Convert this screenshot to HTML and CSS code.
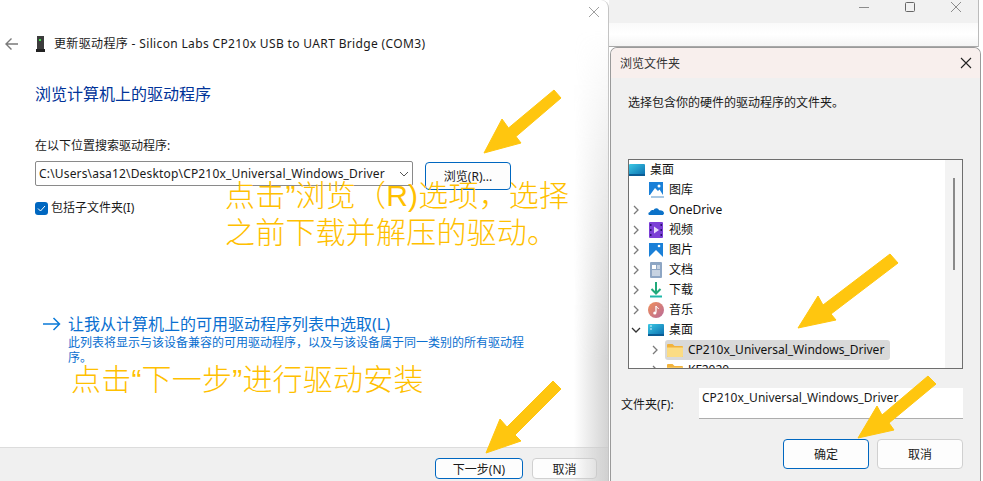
FILE: index.html
```html
<!DOCTYPE html>
<html lang="zh-CN">
<head>
<meta charset="utf-8">
<title>更新驱动程序</title>
<link rel="stylesheet" href="styles.css">
</head>
<body>
<div class="desktop">
  <section class="wizard">
    <div class="wizard-close">
      <svg width="12" height="12" viewBox="0 0 12 12"><path d="M1 1l10 10M11 1L1 11" stroke="#a0a0a0" stroke-width="1" fill="none"/></svg>
    </div>
    <header class="wizard-title">
      <svg class="back" width="16" height="14" viewBox="0 0 16 14"><path d="M14 7H2M7.500 1.500L2 7l5.500 5.500" stroke="#7a7a7a" stroke-width="1.400" fill="none"/></svg>
      <svg class="device" width="9" height="16" viewBox="0 0 9 16"><rect x="1" y="0" width="7" height="13" fill="#3c3c3c"/><rect x="3" y="3" width="2" height="2" fill="#3fe04a"/><rect x="0" y="13" width="9" height="3" fill="#222"/></svg>
      <span>更新驱动程序 - Silicon Labs CP210x USB to UART Bridge (COM3)</span>
    </header>
    <main class="wizard-main">
      <h1 class="heading">浏览计算机上的驱动程序</h1>
      <label class="field-label">在以下位置搜索驱动程序:</label>
      <div class="path-row">
        <div class="combo">
          <span class="combo-text">C:\Users\asa12\Desktop\CP210x_Universal_Windows_Driver</span>
          <svg width="10" height="6" viewBox="0 0 10 6"><path d="M1 1l4 4 4-4" stroke="#555" stroke-width="1" fill="none"/></svg>
        </div>
        <button class="btn btn-primary btn-browse">浏览(R)...</button>
      </div>
      <div class="check-row">
        <span class="check"><svg width="9" height="7" viewBox="0 0 9 7"><path d="M1 3.500l2.500 2.500L8 1" stroke="#fff" stroke-width="1" fill="none"/></svg></span>
        <span>包括子文件夹(I)</span>
      </div>
      <div class="link-block">
        <svg class="link-arrow" width="18" height="14" viewBox="0 0 18 14"><path d="M0 7h16.500M10.500 1l6 6-6 6" stroke="#0a7ad8" stroke-width="1.500" fill="none"/></svg>
        <div class="link-text">
          <div class="link-title">让我从计算机上的可用驱动程序列表中选取(L)</div>
          <p class="link-desc">此列表将显示与该设备兼容的可用驱动程序，以及与该设备属于同一类别的所有驱动程序。</p>
        </div>
      </div>
    </main>
    <footer class="wizard-foot">
      <button class="btn btn-primary btn-next">下一步(N)</button>
      <button class="btn btn-cancel">取消</button>
    </footer>
  </section>

  <section class="back-window">
    <div class="back-bar">
      <svg width="12" height="12" viewBox="0 0 12 12"><path d="M1 6.500h10" stroke="#8c8c8c" fill="none"/></svg>
      <svg width="12" height="12" viewBox="0 0 12 12"><rect x="1.500" y="1.500" width="9" height="9" rx="1" stroke="#666" fill="none"/></svg>
      <svg width="12" height="12" viewBox="0 0 12 12"><path d="M1 1l10 10M11 1L1 11" stroke="#8c8c8c" fill="none"/></svg>
    </div>
    <div class="back-strip"></div>
  </section>

  <section class="dialog">
    <header class="dialog-title">
      <span>浏览文件夹</span>
      <svg width="12" height="12" viewBox="0 0 12 12"><path d="M1 1l10 10M11 1L1 11" stroke="#222" stroke-width="1.100" fill="none"/></svg>
    </header>
    <div class="dialog-body">
      <p class="dialog-msg">选择包含你的硬件的驱动程序的文件夹。</p>
      <div class="tree">
        <div class="tree-list">
          <div class="row row-root">
            <svg class="ico" width="16" height="12" viewBox="0 0 16 12"><defs><linearGradient id="d1" x1="0" x2="1" y1="0" y2="1"><stop offset="0" stop-color="#3cc8e4"/><stop offset="1" stop-color="#0a6fb0"/></linearGradient></defs><rect width="16" height="11" rx="1" fill="url(#d1)"/><rect y="10" width="16" height="2" fill="#0b5c94"/></svg>
            <span class="name">桌面</span>
          </div>
          <div class="row">
            <span class="chev"></span>
            <svg class="ico" width="16" height="16" viewBox="0 0 16 16"><path d="M1 0h14v13H1z" fill="#1a80d8"/><path d="M2 13l5-7 3 3 1.500-1.500L15 13z" fill="#fff"/><circle cx="11" cy="4" r="1.500" fill="#fff"/><path d="M3 14h13v2H3z" fill="#a9c9e4"/></svg>
            <span class="name">图库</span>
          </div>
          <div class="row">
            <svg class="chev" width="6" height="10" viewBox="0 0 6 10"><path d="M1 1l4 4-4 4" stroke="#7a7a7a" stroke-width="1.300" fill="none"/></svg>
            <svg class="ico" width="16" height="16" viewBox="0 0 16 16"><path d="M1.500 13C0 13 0 10.200 2 10c.3-2 2.500-2.500 3.500-1.800C6.500 5.500 10.500 5.500 11 8.200c2.500-.4 5 1 5 3 0 1.200-1 1.800-2 1.800z" fill="#0c72c8"/></svg>
            <span class="name">OneDrive</span>
          </div>
          <div class="row">
            <svg class="chev" width="6" height="10" viewBox="0 0 6 10"><path d="M1 1l4 4-4 4" stroke="#7a7a7a" stroke-width="1.300" fill="none"/></svg>
            <svg class="ico" width="16" height="16" viewBox="0 0 16 16"><rect x="1" y="0" width="14" height="16" rx="1" fill="#7b3fd6"/><path d="M6 4.500l5 3.500-5 3.500z" fill="#e8dcfb"/><path d="M2 2h1.500v2H2zM2 7h1.500v2H2zM2 12h1.500v2H2zM12.500 2H14v2h-1.500zM12.500 7H14v2h-1.500zM12.500 12H14v2h-1.500z" fill="#2c1270"/></svg>
            <span class="name">视频</span>
          </div>
          <div class="row">
            <svg class="chev" width="6" height="10" viewBox="0 0 6 10"><path d="M1 1l4 4-4 4" stroke="#7a7a7a" stroke-width="1.300" fill="none"/></svg>
            <svg class="ico" width="16" height="16" viewBox="0 0 16 16"><rect x="1" y="1" width="14" height="14" fill="#1a80d8"/><path d="M1 15l7-7 7 7z" fill="#fff"/><circle cx="11" cy="4" r="1.300" fill="#fff"/></svg>
            <span class="name">图片</span>
          </div>
          <div class="row">
            <svg class="chev" width="6" height="10" viewBox="0 0 6 10"><path d="M1 1l4 4-4 4" stroke="#7a7a7a" stroke-width="1.300" fill="none"/></svg>
            <svg class="ico" width="16" height="16" viewBox="0 0 16 16"><rect x="2" y="0" width="12" height="16" rx="1" fill="#8ea6c4"/><path d="M4 3h4v4H4z" fill="#fff"/><path d="M9 4h3M9 6h3M4 9h8M4 11h8M4 13h8" stroke="#fff" fill="none"/></svg>
            <span class="name">文档</span>
          </div>
          <div class="row">
            <svg class="chev" width="6" height="10" viewBox="0 0 6 10"><path d="M1 1l4 4-4 4" stroke="#7a7a7a" stroke-width="1.300" fill="none"/></svg>
            <svg class="ico" width="16" height="16" viewBox="0 0 16 16"><path d="M8 0v11M3.500 7L8 11.500 12.500 7" stroke="#1fa97a" stroke-width="2" fill="none"/><path d="M2 14.500h12" stroke="#1fb8a8" stroke-width="2" fill="none"/></svg>
            <span class="name">下载</span>
          </div>
          <div class="row">
            <svg class="chev" width="6" height="10" viewBox="0 0 6 10"><path d="M1 1l4 4-4 4" stroke="#7a7a7a" stroke-width="1.300" fill="none"/></svg>
            <svg class="ico" width="16" height="16" viewBox="0 0 16 16"><defs><linearGradient id="m1" x1="0" x2="1" y1="0" y2="1"><stop offset="0" stop-color="#f0905a"/><stop offset="1" stop-color="#b86a9a"/></linearGradient></defs><circle cx="8" cy="8" r="8" fill="url(#m1)"/><path d="M8 4v6.500" stroke="#fff" stroke-width="1.300"/><circle cx="6.800" cy="11" r="1.600" fill="#fff"/><path d="M8 4c.5 1.500 2.500 1.500 2.500 3" stroke="#fff" fill="none"/></svg>
            <span class="name">音乐</span>
          </div>
          <div class="row">
            <svg class="chev chev-open" width="10" height="6" viewBox="0 0 10 6"><path d="M1 1l4 4 4-4" stroke="#333" stroke-width="1.300" fill="none"/></svg>
            <svg class="ico" width="16" height="12" viewBox="0 0 16 12"><rect width="16" height="11" rx="1" fill="url(#d1)"/><rect y="10" width="16" height="2" fill="#0b5c94"/><path d="M2 2h2M2 5h2" stroke="#d8f2fb" fill="none"/></svg>
            <span class="name">桌面</span>
          </div>
          <div class="row row-child">
            <svg class="chev" width="6" height="10" viewBox="0 0 6 10"><path d="M1 1l4 4-4 4" stroke="#7a7a7a" stroke-width="1.300" fill="none"/></svg>
            <div class="cell cell-selected">
              <svg class="ico" width="16" height="13" viewBox="0 0 16 13"><path d="M0 1a1 1 0 0 1 1-1h4.500l2 2H15a1 1 0 0 1 1 1v9a1 1 0 0 1-1 1H1a1 1 0 0 1-1-1z" fill="#f2b33c"/><path d="M0 3.500h16V12a1 1 0 0 1-1 1H1a1 1 0 0 1-1-1z" fill="#fbdc84"/></svg>
              <span class="name">CP210x_Universal_Windows_Driver</span>
            </div>
          </div>
          <div class="row row-child">
            <svg class="chev" width="6" height="10" viewBox="0 0 6 10"><path d="M1 1l4 4-4 4" stroke="#7a7a7a" stroke-width="1.300" fill="none"/></svg>
            <div class="cell">
              <svg class="ico" width="16" height="13" viewBox="0 0 16 13"><path d="M0 1a1 1 0 0 1 1-1h4.500l2 2H15a1 1 0 0 1 1 1v9a1 1 0 0 1-1 1H1a1 1 0 0 1-1-1z" fill="#f2b33c"/><path d="M0 3.500h16V12a1 1 0 0 1-1 1H1a1 1 0 0 1-1-1z" fill="#fbdc84"/></svg>
              <span class="name">KF2020</span>
            </div>
          </div>
        </div>
        <div class="scroll"><div class="thumb"></div></div>
      </div>
      <div class="folder-row">
        <label class="folder-label">文件夹(F):</label>
        <div class="folder-input">CP210x_Universal_Windows_Driver</div>
      </div>
      <div class="dialog-actions">
        <button class="btn btn-primary btn-dlg">确定</button>
        <button class="btn btn-cancel btn-dlg">取消</button>
      </div>
    </div>
  </section>

  <div class="note note-browse">点击”浏览（R)选项，选择<br>之前下载并解压的驱动。</div>
  <div class="note note-next">点击“下一步”进行驱动安装</div>

  <svg class="arrows" width="983" height="481" viewBox="0 0 983 481">
    <g fill="#ffc60f" stroke="#ffc60f" stroke-linejoin="round">
      <path d="M484 153L502 119L508.500 128L554 90L561 98L516 136.500L521 143z"/>
      <path d="M486 453L500 419L507 427L553 381L561 389L515 435L521 441z"/>
      <path d="M798 328L818 296L823 305L890 254L898 263L831 314L836 320z"/>
      <path d="M858 438L877 406L882 415L928 376L936 384L889 423L894 430z"/>
    </g>
  </svg>
</div>
</body>
</html>
```

FILE: styles.css
```css
* { box-sizing: border-box; }
html, body { margin: 0; padding: 0; }
body {
  font-family: "Noto Sans", "Noto Sans CJK SC", sans-serif;
  font-size: 12px;
  color: #1a1a1a;
  background: #fff;
}
.desktop {
  position: relative;
  width: 983px;
  height: 481px;
  overflow: hidden;
  display: flex;
  background: #fff;
}

/* wizard */
.wizard {
  position: relative;
  width: 609px;
  height: 481px;
  flex: none;
  display: flex;
  flex-direction: column;
  border-top-right-radius: 8px;
  border-right: 1px solid #c4c4c4;
  background: #fff;
}
.wizard::after {
  content: "";
  position: absolute;
  right: 0;
  top: 0;
  bottom: 0;
  width: 34px;
  background: linear-gradient(to right, rgba(200,200,200,0), rgba(200,200,200,.8));
  -webkit-mask-image: linear-gradient(to bottom, transparent 30px, #000 360px);
  mask-image: linear-gradient(to bottom, transparent 30px, #000 360px);
  pointer-events: none;
}
.wizard-close { position: absolute; left: 588px; top: 6px; line-height: 0; }
.wizard-title {
  display: flex;
  align-items: center;
  height: 16px;
  margin-top: 36px;
  padding-left: 4px;
  line-height: 16px;
  white-space: nowrap;
  letter-spacing: .35px;
}
.wizard-title .device { margin-left: 16px; margin-right: 9px; }
.wizard-main { flex: 1; padding: 32px 0 0 35px; }
.heading {
  margin: 0;
  font-size: 16px;
  line-height: 20px;
  font-weight: 400;
  color: #003399;
}
.field-label { display: block; margin-top: 34px; line-height: 16px; }
.path-row { display: flex; align-items: flex-start; margin-top: 7px; }
.combo {
  width: 378px;
  height: 25px;
  display: flex;
  align-items: center;
  justify-content: space-between;
  padding: 0 3px 0 3px;
  background: #fff;
  border: 1px solid #8a8a8a;
  border-radius: 2px;
  white-space: nowrap;
}
.combo-text { letter-spacing: .17px; }
.combo svg { flex: none; }
.btn {
  font-family: inherit;
  font-size: 12px;
  color: #1a1a1a;
  padding: 0;
  background: #fdfdfd;
  border: 1px solid #d0d0d0;
  border-radius: 4px;
}
.btn-primary { border: 1px solid #0067c0; }
.btn-browse { width: 86px; height: 28px; margin: 1px 0 0 12px; }
.check-row { display: flex; align-items: center; height: 14px; margin-top: 11px; line-height: 14px; }
.check {
  width: 13px;
  height: 13px;
  margin-right: 3px;
  display: flex;
  align-items: center;
  justify-content: center;
  background: #0067c0;
  border-radius: 3px;
}
.link-block { display: flex; align-items: flex-start; margin: 99px 0 0 8px; }
.link-arrow { flex: none; margin: 3px 7px 0 0; }
.link-text { width: 462px; color: #0a6fd0; }
.link-title { font-size: 16px; line-height: 20px; white-space: nowrap; }
.link-desc { margin: 1px 0 0; line-height: 15px; }
.wizard-foot {
  height: 34px;
  display: flex;
  align-items: flex-start;
  justify-content: flex-end;
  gap: 9px;
  padding: 10px 11px 0 0;
  background: #f0f0f0;
  border-top: 1px solid #dcdcdc;
}
.btn-next { width: 88px; height: 21px; }
.wizard-foot .btn-cancel { width: 65px; height: 21px; }

/* window behind */
.back-window { flex: 1; height: 47px; display: flex; flex-direction: column; margin-right: 4px; border-right: 1px solid #bbb; }
.back-bar {
  height: 23px;
  flex: none;
  display: flex;
  justify-content: flex-end;
  gap: 34px;
  padding: 1px 16px 0 0;
  background: #f1f1f1;
}
.back-strip { flex: 1; background: linear-gradient(#fafafa, #fff 50%, #f4f4f4); border-bottom: 1px solid #a8a8a8; }

/* dialog */
.dialog {
  position: absolute;
  left: 610px;
  top: 47px;
  width: 371px;
  height: 434px;
  display: flex;
  flex-direction: column;
  border: 1px solid #9a9a9a;
  border-bottom: 0;
  border-top-left-radius: 7px;
  border-top-right-radius: 7px;
  background: #f0f0f0;
  overflow: hidden;
}
.dialog-title {
  height: 30px;
  flex: none;
  display: flex;
  align-items: center;
  justify-content: space-between;
  padding: 0 8px 0 9px;
  background: #f8efed;
  color: #333;
}
.dialog-body { flex: 1; padding: 0 17px 0 17px; }
.dialog-msg { margin: 17px 0 0; line-height: 16px; }
.tree {
  display: flex;
  height: 210px;
  margin-top: 48px;
  background: #fff;
  border: 1px solid #6e6e6e;
  overflow: hidden;
}
.tree-list { flex: 1; min-width: 0; }
.row {
  display: flex;
  align-items: center;
  height: 20px;
  padding-left: 4px;
  white-space: nowrap;
  color: #111;
}
.row-root { padding-left: 0; }
.row-root .ico { margin-right: 3px; }
.row .chev { flex: none; width: 6px; margin-right: 9px; }
.row .chev-open { width: 10px; margin-left: -2px; margin-right: 7px; }
.row .ico { flex: none; margin-right: 5px; }
.row .name { line-height: 20px; }
.row-child { padding-left: 23px; }
.row-child .chev { margin-right: 7px; }
.cell {
  display: flex;
  align-items: center;
  width: 225px;
  height: 20px;
  padding-left: 2px;
  border-radius: 3px;
}
.cell-selected { background: #d9d9d9; }
.scroll { width: 17px; flex: none; padding: 18px 0 0 8px; background: #f3f3f3; }
.thumb { width: 2px; height: 92px; background: #8a8a8a; }
.folder-row { display: flex; margin-top: 19px; }
.folder-label { margin: 9px 0 0 -7px; width: 78px; line-height: 16px; flex: none; }
.folder-input {
  flex: 1;
  height: 31px;
  padding: 2px 3px;
  background: #fff;
  border-bottom: 1px solid #adadad;
  line-height: 16px;
  white-space: nowrap;
}
.dialog-actions { display: flex; justify-content: flex-end; gap: 8px; margin-top: 20px; }
.btn-dlg { width: 86px; height: 30px; border-width: 1px; }

/* annotations */
.note {
  position: absolute;
  color: #ffc000;
  font-family: "Liberation Sans", "Noto Sans CJK SC", sans-serif;
  font-weight: 300;
  font-size: 30px;
  line-height: 37px;
  letter-spacing: .2px;
  white-space: nowrap;
}
.note-browse { left: 225px; top: 177px; }
.note-next { left: 71px; top: 361px; }
.arrows { position: absolute; left: 0; top: 0; pointer-events: none; }
```
